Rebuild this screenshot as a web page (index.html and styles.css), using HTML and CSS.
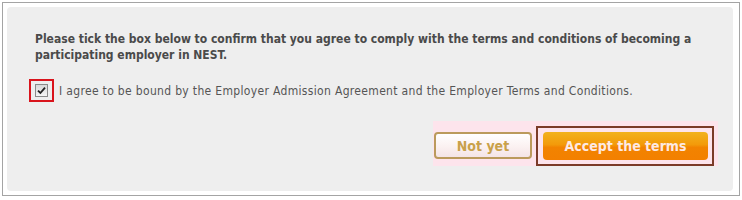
FILE: index.html
```html
<!DOCTYPE html>
<html lang="en">
<head>
    <meta charset="UTF-8">
    <title>Employer terms</title>
    <link rel="stylesheet" href="styles.css">
</head>
<body>

    <div class="frame">
        <div class="panel">
            <p class="intro">Please tick the box below to confirm that you agree to comply with the terms and conditions of becoming a participating employer in NEST.</p>

            <label class="agree">
                <span class="tick-ring">
                    <span class="tick">
                        <svg width="9" height="9" viewBox="0 0 9 9"><path d="M1 4.6 L3.4 7 L8 1.6" fill="none" stroke="#222" stroke-width="1.8"/></svg>
                    </span>
                </span>
                I agree to be bound by the Employer Admission Agreement and the Employer Terms and Conditions.
            </label>

            <div class="actions">
                <div class="action-bg">
                    <button class="btn btn-later">Not yet</button>
                    <span class="focus-ring"><button class="btn btn-accept">Accept the terms</button></span>
                </div>
            </div>
        </div>
    </div>

</body>
</html>
```

FILE: styles.css
```css
body { margin: 0; background: #fff; font-family: "DejaVu Sans Condensed", "DejaVu Sans", sans-serif; }
.frame { margin: 2px; height: 194px; box-sizing: border-box; border: 1px solid #a4a4a4; padding: 4px 6px 4px 4px; }
.panel { height: 184px; box-sizing: border-box; background: #eeeeee; border-radius: 4px; padding: 24px 15px 0 28px; }
.intro { margin: 0; font-size: 12px; line-height: 16px; font-weight: bold; color: #4a4a4a; }
.agree { display: flex; align-items: center; margin: 16px 0 0 -6px; font-size: 12px; letter-spacing: 0.33px; color: #555; gap: 5px; }
.tick-ring { width: 25px; height: 23px; box-sizing: border-box; border: 2px solid #d9141c; display: flex; align-items: center; justify-content: center; }
.tick { width: 11px; height: 11px; border: 1px solid #8a8a8a; background: linear-gradient(#d8d8d8, #f4f4f4); display: flex; align-items: center; justify-content: center; }
.actions { display: flex; justify-content: flex-end; margin-top: 19px; }
.action-bg { display: flex; align-items: flex-end; background: #fde4ec; padding: 0 4px 0 1px; height: 45px; box-sizing: border-box; }
.btn { font-family: inherit; font-weight: bold; font-size: 14px; border-radius: 4px; cursor: pointer; }
.btn-later { width: 98px; height: 27px; margin-bottom: 7px; border: 2px solid #bb9a5c; color: #c9a14a; background: linear-gradient(#ffffff, #fbf1f1 55%, #f4e4e6); }
.focus-ring { display: flex; margin-left: 4px; border: 2px solid #7b3b28; padding: 4px 4px 4px 5px; }
.btn-accept { width: 165px; height: 28px; border: none; color: #fde9e4; background: linear-gradient(#f2b21e, #f39a0a 45%, #f28300 55%, #f38000); }
```
